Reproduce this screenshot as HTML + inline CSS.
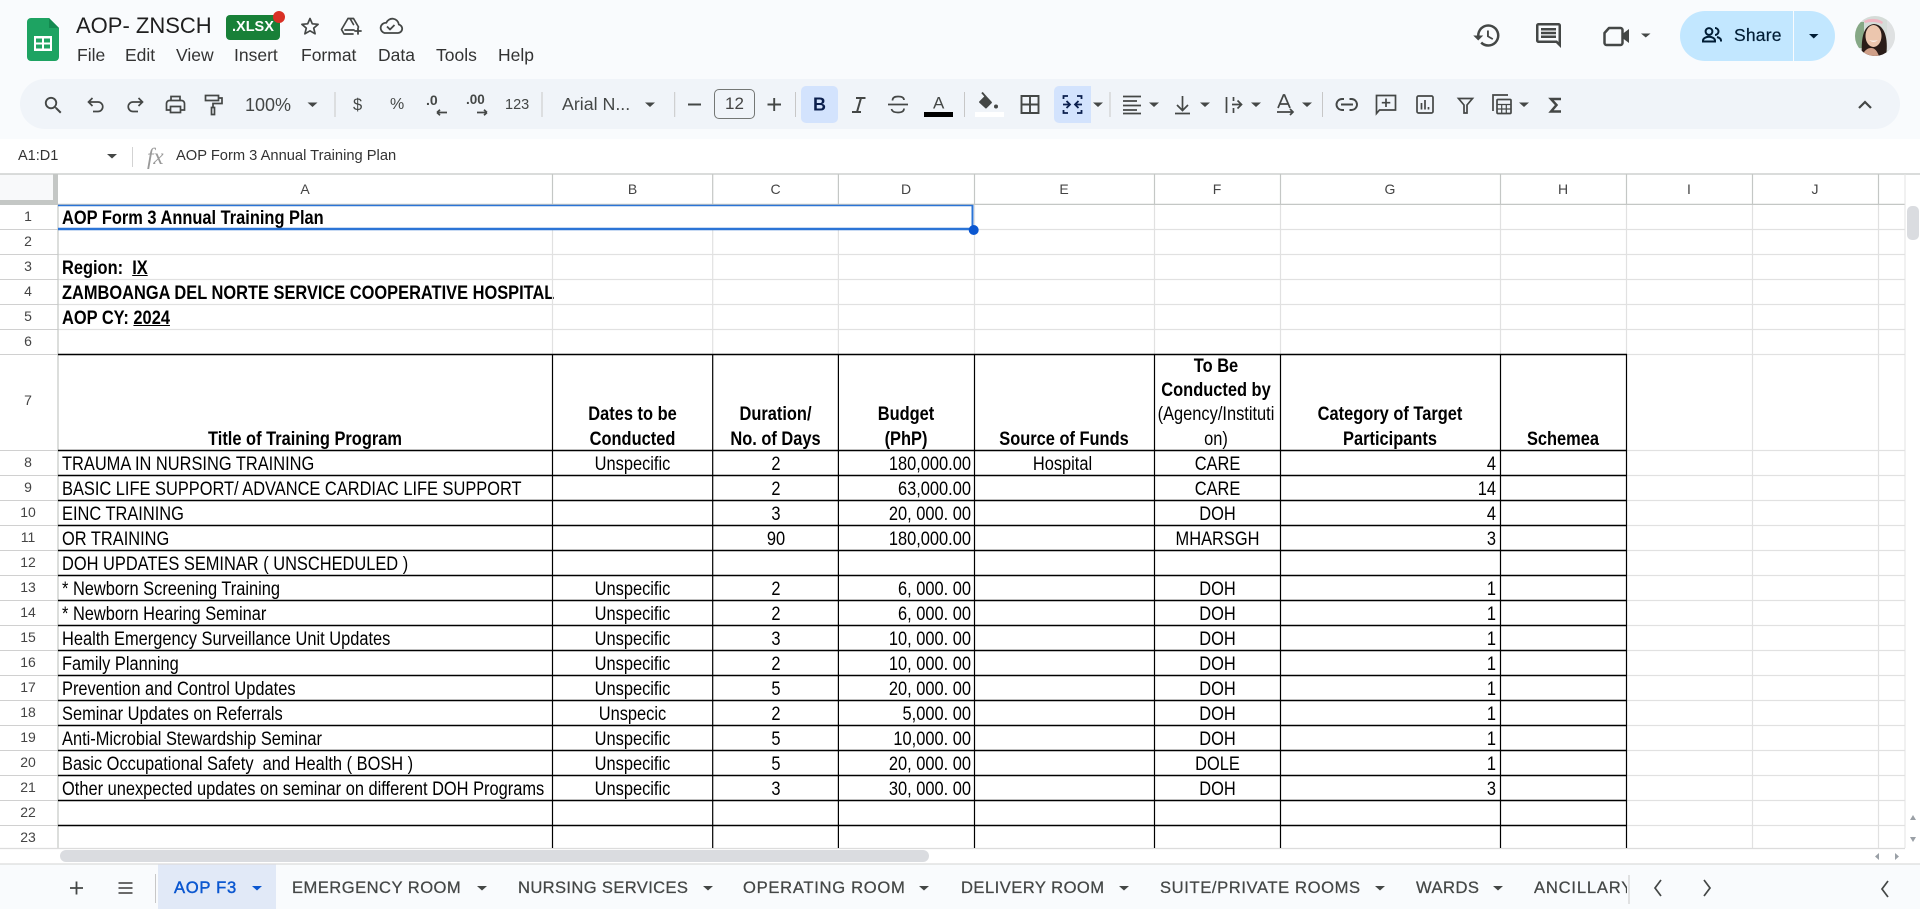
<!DOCTYPE html>
<html><head><meta charset="utf-8"><title>AOP- ZNSCH</title>
<style>
html,body{margin:0;padding:0;width:1920px;height:909px;overflow:hidden;background:#fff;font-family:"Liberation Sans",sans-serif}
#top{position:absolute;left:0;top:0;width:1920px;height:139px;background:#f9fbfd}
#pill{position:absolute;left:20px;top:79px;width:1880px;height:50px;border-radius:25px;background:#f0f4f9}
.box{position:absolute}
.t{position:absolute;white-space:pre;color:#1f1f1f}
.m{font-size:17.5px;top:44px;line-height:22px;color:#333}
.tb{font-size:17px;top:94px;line-height:22px;color:#444746}
.h{position:absolute;top:174px;height:30px;line-height:31px;text-align:center;font-size:14px;color:#444}
.n{position:absolute;left:0;width:56px;text-align:center;height:25px;line-height:23px;font-size:14px;color:#444}
.r{position:absolute;left:0;width:1920px;height:25px;line-height:25px;font-size:19.6px;color:#000}
.r i{position:absolute;font-style:normal;white-space:pre;top:.7px;transform:scaleX(.8375)}
.a{left:62px;transform-origin:0 50%}
.b{left:553px;width:159px;text-align:center}
.c{left:714px;width:124px;text-align:center}
.d{left:839px;width:132px;text-align:right;transform-origin:100% 50%}
.e{left:975px;width:175px;text-align:center}
.f{left:1155px;width:125px;text-align:center}
.g{left:1281px;width:215px;text-align:right;transform-origin:100% 50%}
.b7{position:absolute;font-size:19.6px;line-height:24.3px;color:#000;text-align:center;font-weight:bold;bottom:-1px;white-space:nowrap;transform:scaleX(.8375)}
.tab{position:absolute;top:877px;line-height:22px;font-size:16.6px;letter-spacing:.45px;color:#444746;white-space:pre;-webkit-text-stroke:.25px #444746}
svg{position:absolute;left:0;top:0}
</style></head><body>
<div id="top"></div><div id="pill"></div>
<div class="box" style="left:801px;top:86px;width:37px;height:37px;border-radius:5px;background:#d3e3fd"></div>
<div class="box" style="left:1054px;top:86px;width:37px;height:37px;border-radius:5px 0 0 5px;background:#d3e3fd"></div>
<div class="box" style="left:714px;top:89px;width:41px;height:30px;border:1px solid #747775;border-radius:5px;box-sizing:border-box"></div>
<div class="box" style="left:226px;top:15px;width:54px;height:25px;border-radius:4px;background:#188038"></div>
<div class="box" style="left:1680px;top:11px;width:155px;height:50px;border-radius:25px;background:#c2e7ff"></div>
<div class="box" style="left:1793px;top:11px;width:1px;height:50px;background:#f9fbfd"></div>
<div class="box" style="left:0;top:174px;width:53px;height:26px;background:#f8f9fa"></div>
<div class="box" style="left:0;top:200px;width:58px;height:4px;background:#c4c7c5"></div>
<div class="box" style="left:53px;top:174px;width:5px;height:30px;background:#c4c7c5"></div>
<div class="box" style="left:0;top:864px;width:1920px;height:45px;background:#f9fbfd"></div>
<div class="box" style="left:158px;top:864px;width:118px;height:45px;background:#e1e9f7"></div>

<div class="t" style="left:76px;top:13px;font-size:22px;line-height:26px;color:#1f1f1f">AOP- ZNSCH</div>
<div class="t" style="left:232px;top:18px;font-size:14.5px;line-height:19px;color:#fff;font-weight:bold">.XLSX</div>
<div class="t m" style="left:77px">File</div><div class="t m" style="left:125px">Edit</div><div class="t m" style="left:176px">View</div><div class="t m" style="left:234px">Insert</div><div class="t m" style="left:301px">Format</div><div class="t m" style="left:378px">Data</div><div class="t m" style="left:436px">Tools</div><div class="t m" style="left:498px">Help</div>
<div class="t tb" style="left:245px;font-size:18px">100%</div>
<div class="t tb" style="left:353px;font-size:16.5px">$</div>
<div class="t tb" style="left:390px;font-size:16px">%</div>
<div class="t tb" style="left:426px;font-size:14px;top:89px;font-weight:bold">.0</div>
<div class="t tb" style="left:466px;font-size:13.5px;top:89px;font-weight:bold">.00</div>
<div class="t tb" style="left:505px;font-size:14.5px">123</div>
<div class="t tb" style="left:562px;font-size:17.8px;top:93px">Arial N...</div>
<div class="t tb" style="left:725px;width:20px;font-size:17px;color:#444;top:93px">12</div>
<div class="t" style="left:1734px;top:23px;font-size:17.5px;line-height:24px;color:#001d35;letter-spacing:.2px;-webkit-text-stroke:.2px #001d35">Share</div>
<div class="t" style="left:18px;top:147px;font-size:14.5px;line-height:18px;color:#333">A1:D1</div>
<div class="t" style="left:147px;top:146px;font-size:23px;line-height:22px;color:#999;font-family:'Liberation Serif',serif;font-style:italic">fx</div>
<div class="t" style="left:176px;top:147px;font-size:14.7px;line-height:18px;color:#333">AOP Form 3 Annual Training Plan</div>

<div class="h" style="left:58px;width:494px">A</div><div class="h" style="left:552px;width:161px">B</div><div class="h" style="left:713px;width:125px">C</div><div class="h" style="left:838px;width:136px">D</div><div class="h" style="left:974px;width:180px">E</div><div class="h" style="left:1154px;width:126px">F</div><div class="h" style="left:1280px;width:220px">G</div><div class="h" style="left:1500px;width:126px">H</div><div class="h" style="left:1626px;width:126px">I</div><div class="h" style="left:1752px;width:126px">J</div>

<div class="n" style="top:205px">1</div><div class="n" style="top:230px">2</div><div class="n" style="top:255px">3</div><div class="n" style="top:280px">4</div><div class="n" style="top:305px">5</div><div class="n" style="top:330px">6</div><div class="n" style="top:389px">7</div><div class="n" style="top:451px">8</div><div class="n" style="top:476px">9</div><div class="n" style="top:501px">10</div><div class="n" style="top:526px">11</div><div class="n" style="top:551px">12</div><div class="n" style="top:576px">13</div><div class="n" style="top:601px">14</div><div class="n" style="top:626px">15</div><div class="n" style="top:651px">16</div><div class="n" style="top:676px">17</div><div class="n" style="top:701px">18</div><div class="n" style="top:726px">19</div><div class="n" style="top:751px">20</div><div class="n" style="top:776px">21</div><div class="n" style="top:801px">22</div><div class="n" style="top:826px">23</div>

<div class="r" style="top:205px;font-weight:bold"><i class="a">AOP Form 3 Annual Training Plan</i></div>
<div class="r" style="top:255px;font-weight:bold"><i class="a">Region:  <u>IX</u></i></div>
<div class="r" style="top:280px;font-weight:bold"><i class="a">ZAMBOANGA DEL NORTE SERVICE COOPERATIVE HOSPITAL</i></div>
<div class="r" style="top:305px;font-weight:bold"><i class="a">AOP CY: <u>2024</u></i></div>

<div class="box" style="left:0;top:355px;width:1920px;height:95px">
<div class="b7" style="left:58px;width:494px">Title of Training Program</div>
<div class="b7" style="left:552px;width:161px">Dates to be<br>Conducted</div>
<div class="b7" style="left:713px;width:125px">Duration/<br>No. of Days</div>
<div class="b7" style="left:838px;width:136px">Budget<br>(PhP)</div>
<div class="b7" style="left:974px;width:180px">Source of Funds</div>
<div class="b7" style="left:1122px;width:190px;margin-left:-1px">To Be<br>Conducted by<br><span style="font-weight:normal">(Agency/Instituti<br>on)</span></div>
<div class="b7" style="left:1280px;width:220px">Category of Target<br>Participants</div>
<div class="b7" style="left:1500px;width:126px">Schemea</div>
</div>

<div class="r" style="top:451px"><i class="a">TRAUMA IN NURSING TRAINING</i><i class="b">Unspecific</i><i class="c">2</i><i class="d">180,000.00</i><i class="e">Hospital</i><i class="f">CARE</i><i class="g">4</i></div>
<div class="r" style="top:476px"><i class="a">BASIC LIFE SUPPORT/ ADVANCE CARDIAC LIFE SUPPORT</i><i class="c">2</i><i class="d">63,000.00</i><i class="f">CARE</i><i class="g">14</i></div>
<div class="r" style="top:501px"><i class="a">EINC TRAINING</i><i class="c">3</i><i class="d">20, 000. 00</i><i class="f">DOH</i><i class="g">4</i></div>
<div class="r" style="top:526px"><i class="a">OR TRAINING</i><i class="c">90</i><i class="d">180,000.00</i><i class="f">MHARSGH</i><i class="g">3</i></div>
<div class="r" style="top:551px"><i class="a">DOH UPDATES SEMINAR ( UNSCHEDULED )</i></div>
<div class="r" style="top:576px"><i class="a">* Newborn Screening Training</i><i class="b">Unspecific</i><i class="c">2</i><i class="d">6, 000. 00</i><i class="f">DOH</i><i class="g">1</i></div>
<div class="r" style="top:601px"><i class="a">* Newborn Hearing Seminar</i><i class="b">Unspecific</i><i class="c">2</i><i class="d">6, 000. 00</i><i class="f">DOH</i><i class="g">1</i></div>
<div class="r" style="top:626px"><i class="a">Health Emergency Surveillance Unit Updates</i><i class="b">Unspecific</i><i class="c">3</i><i class="d">10, 000. 00</i><i class="f">DOH</i><i class="g">1</i></div>
<div class="r" style="top:651px"><i class="a">Family Planning</i><i class="b">Unspecific</i><i class="c">2</i><i class="d">10, 000. 00</i><i class="f">DOH</i><i class="g">1</i></div>
<div class="r" style="top:676px"><i class="a">Prevention and Control Updates</i><i class="b">Unspecific</i><i class="c">5</i><i class="d">20, 000. 00</i><i class="f">DOH</i><i class="g">1</i></div>
<div class="r" style="top:701px"><i class="a">Seminar Updates on Referrals</i><i class="b">Unspecic</i><i class="c">2</i><i class="d">5,000. 00</i><i class="f">DOH</i><i class="g">1</i></div>
<div class="r" style="top:726px"><i class="a">Anti-Microbial Stewardship Seminar</i><i class="b">Unspecific</i><i class="c">5</i><i class="d">10,000. 00</i><i class="f">DOH</i><i class="g">1</i></div>
<div class="r" style="top:751px"><i class="a">Basic Occupational Safety  and Health ( BOSH )</i><i class="b">Unspecific</i><i class="c">5</i><i class="d">20, 000. 00</i><i class="f">DOLE</i><i class="g">1</i></div>
<div class="r" style="top:776px"><i class="a">Other unexpected updates on seminar on different DOH Programs</i><i class="b">Unspecific</i><i class="c">3</i><i class="d">30, 000. 00</i><i class="f">DOH</i><i class="g">3</i></div>

<div class="t tab" style="left:174px;color:#0b57d0;-webkit-text-stroke:.45px #0b57d0;letter-spacing:.7px">AOP F3</div>
<div class="t tab" style="left:292px">EMERGENCY ROOM</div>
<div class="t tab" style="left:518px;letter-spacing:.35px">NURSING SERVICES</div>
<div class="t tab" style="left:743px;letter-spacing:.7px">OPERATING ROOM</div>
<div class="t tab" style="left:961px">DELIVERY ROOM</div>
<div class="t tab" style="left:1160px;letter-spacing:.6px">SUITE/PRIVATE ROOMS</div>
<div class="t tab" style="left:1416px">WARDS</div>
<div class="t tab" style="left:1534px;width:93px;overflow:hidden;letter-spacing:.8px">ANCILLARY</div>

<svg width="1920" height="909" viewBox="0 0 1920 909" fill="none">
<g stroke="#e1e1e1" stroke-width="1.2">
<path d="M58 229.500H1905M58 254.500H1905M58 279.500H1905M58 304.500H1905M58 329.500H1905M58 354.500H1905M1627 450.500H1905M1627 475.500H1905M1627 500.500H1905M1627 525.500H1905M1627 550.500H1905M1627 575.500H1905M1627 600.500H1905M1627 625.500H1905M1627 650.500H1905M1627 675.500H1905M1627 700.500H1905M1627 725.500H1905M1627 750.500H1905M1627 775.500H1905M1627 800.500H1905M1627 825.500H1905"/>
<path d="M552.500 230V355M712.700 230V355M838.400 230V355M974.500 205V355M1154.500 205V355M1280.500 205V355M1500.500 205V355M1626.500 205V355M1752.500 205V848M1878.500 205V848"/>
</g>
<path d="M0 229.500H58M0 254.500H58M0 279.500H58M0 304.500H58M0 329.500H58M0 354.500H58M0 450.500H58M0 475.500H58M0 500.500H58M0 525.500H58M0 550.500H58M0 575.500H58M0 600.500H58M0 625.500H58M0 650.500H58M0 675.500H58M0 700.500H58M0 725.500H58M0 750.500H58M0 775.500H58M0 800.500H58M0 825.500H58" stroke="#d0d0d0" stroke-width="1"/>
<g stroke="#c4c7c5" stroke-width="1.2">
<path d="M0 174H1920M0 204.400H1905M58 205V848"/>
<path d="M552.500 174V204M712.700 174V204M838.400 174V204M974.500 174V204M1154.500 174V204M1280.500 174V204M1500.500 174V204M1626.500 174V204M1752.500 174V204M1878.500 174V204"/>
</g>
<path d="M1905 174V848" stroke="#e3e3e3"/>
<path d="M0 848.500H1905M0 864H1920" stroke="#dcdcdc" stroke-width="1.2"/>
<rect x="1907" y="206" width="12" height="34" rx="5" fill="#dadce0"/>
<rect x="60" y="850" width="869" height="12" rx="6" fill="#dadce0"/>
<path d="M1910 820l3-5 3 5zM1910 837l3 5 3-5zM1879 853v7l-4-3.500zM1895 853v7l4-3.500z" fill="#9aa0a6"/>
<g stroke="#000" stroke-width="1.400">
<path d="M58 354.500H1627M58 450.500H1627M58 475.500H1627M58 500.500H1627M58 525.500H1627M58 550.500H1627M58 575.500H1627M58 600.500H1627M58 625.500H1627M58 650.500H1627M58 675.500H1627M58 700.500H1627M58 725.500H1627M58 750.500H1627M58 775.500H1627M58 800.500H1627M58 825.500H1627"/>
<path d="M552.500 354V848M712.700 354V848M838.400 354V848M974.500 354V848M1154.500 354V848M1280.500 354V848M1500.500 354V848M1626.500 354V848" stroke-width="1.200"/>
</g>
<path d="M58 205.500H972.500V229" stroke="#2b74d6" stroke-width="1.400"/>
<path d="M972.500 205V229" stroke="#2b74d6" stroke-width="2"/>
<path d="M58 229H970" stroke="#2b74d6" stroke-width="2.400"/>
<circle cx="973.700" cy="230" r="5" fill="#0b57d0"/>

<path d="M31 18h18l10 10v29a4 4 0 0 1-4 4H31a4 4 0 0 1-4-4V22a4 4 0 0 1 4-4z" fill="#1ea362"/>
<path d="M49 18l10 10H49z" fill="#148a50"/>
<path d="M34 36h18v15H34zM36 38.500v4h6v-4zM44 38.500v4h6v-4zM36 44.500v4h6v-4zM44 44.500v4h6v-4z" fill="#fff" fill-rule="evenodd"/>
<circle cx="279" cy="17" r="6" fill="#d93025"/>
<path d="M310 18.500l2.300 5.300 5.800.5-4.400 3.800 1.400 5.700-5.100-3-5.100 3 1.400-5.700-4.400-3.800 5.800-.5z" stroke="#444746" stroke-width="1.700" stroke-linejoin="round"/>
<g stroke="#444746" stroke-width="1.700" stroke-linejoin="round" stroke-linecap="round">
<path d="M348 18.500h5.500l5 8.500M348 18.500l-6.500 11 2.500 4.500h9M350 18.500l3.500 6M345 30h9"/>
<path d="M358 28v6M355 31h6" stroke-width="1.800"/>
</g>
<path d="M384.500 33h13.500a4.300 4.300 0 0 0 .800-8.500 6.500 6.500 0 0 0-12.500-1.700 5.200 5.200 0 0 0-1.800 10.200zM387 26.500l3 3 4.500-4.500" stroke="#444746" stroke-width="1.800" stroke-linejoin="round"/>

<g fill="#444746">
<path transform="translate(1472 20.500) scale(1.250)" d="M13 3a9 9 0 0 0-9 9H1l3.890 3.890.070.140L9 12H6c0-3.870 3.130-7 7-7s7 3.130 7 7-3.130 7-7 7c-1.930 0-3.680-.790-4.940-2.060l-1.420 1.420A8.954 8.954 0 0 0 13 21a9 9 0 0 0 0-18zm-1 5v5l4.280 2.540.720-1.210-3.500-2.080V8H12z"/>
<path transform="translate(1533.500 20.500) scale(1.250)" d="M22 4c0-1.100-.9-2-2-2H4c-1.100 0-2 .9-2 2v12c0 1.100.9 2 2 2h14l4 4V4zm-2 13.170L18.830 16H4V4h16v13.170zM6 12h12v2H6zm0-3h12v2H6zm0-3h12v2H6z"/>
<path d="M1641 33.500h9.500l-4.750 4z"/>
</g>
<path d="M1609 28h11.500a2 2 0 0 1 2 2v13a2 2 0 0 1-2 2h-14a2 2 0 0 1-2-2V33z" stroke="#444746" stroke-width="2.500" stroke-linejoin="round"/>
<path d="M1623 33.500l6-4.500v14l-6-4.500z" fill="#444746"/>
<g stroke="#001d35" stroke-width="2" fill="none">
<circle cx="1709" cy="31.500" r="3.400"/><path d="M1703 41.500v-1c0-2.500 3.500-3.700 6-3.700s6 1.200 6 3.700v1z"/>
<path d="M1715 28a3.500 3.500 0 0 1 0 7M1717 37c2 .6 4 1.700 4 3.500v1"/>
</g>
<path d="M1809 34h9.500l-4.750 4.500z" fill="#001d35"/>
<clipPath id="av"><circle cx="1875" cy="36" r="20"/></clipPath>
<g clip-path="url(#av)">
<rect x="1855" y="16" width="40" height="40" fill="#d5dcd8"/>
<rect x="1855" y="22" width="9" height="26" fill="#86a886"/>
<rect x="1887" y="20" width="8" height="30" fill="#dfe1e2"/>
<path d="M1862 56c-1-14 0-31 12-32 13 1 14 20 12 32z" fill="#2a1c18"/>
<ellipse cx="1873.500" cy="36" rx="8" ry="11" fill="#ecc6ae"/>
<path d="M1864 21c5-3 14-3 19 1l-1 2c-5-2.500-12-2.500-17-1z" fill="#efb6c2"/>
<path d="M1869 40q4.500 3.500 9 0q-4.500 1.500-9 0z" fill="#fff"/>
<path d="M1862 56c2-5 5-8 9-8s6 3 8 8z" fill="#cf9f88"/>
</g>

<g fill="#444746">
<path transform="translate(42 94) scale(.95)" d="M15.500 14h-.790l-.280-.270A6.471 6.471 0 0 0 16 9.500 6.500 6.500 0 1 0 9.500 16c1.610 0 3.090-.590 4.230-1.570l.270.280v.790l5 4.990L20.490 19l-4.990-5zm-6 0C7.010 14 5 11.990 5 9.500S7.010 5 9.500 5 14 7.010 14 9.500 11.990 14 9.500 14z"/>
<path d="M307.500 102.500h10l-5 4.500zM645 102.500h10l-5 4.500zM1093 102.500h10l-5 4.500zM1149 102.500h10l-5 4.500zM1200 102.500h10l-5 4.500zM1251 102.500h10l-5 4.500zM1302 102.500h10l-5 4.500zM1519 102.500h10l-5 4.500z"/>
<rect x="924" y="112" width="29" height="5" fill="#000"/>
<rect x="975" y="112" width="29" height="5" fill="#fff"/>
</g>
<g stroke="#c7c7c7" stroke-width="1"><path d="M335 92v25M542 92v25M674.700 92v25M795.500 92v25M964.500 92v25M1110 92v25M1322.500 92v25"/></g>
<g stroke="#444746" stroke-width="1.700" stroke-linecap="butt" stroke-linejoin="miter">
<path d="M92.500 98L88.500 102l4 4M88.500 102h9.500a4.500 4.500 0 0 1 0 9.500h-5"/>
<path d="M138.500 98l4 4-4 4M142.500 102h-9.500a4.500 4.500 0 0 0 0 9.500h5"/>
<path d="M171 100V96.500h9V100M170 110h-3.500v-6.500a3 3 0 0 1 3-3h12a3 3 0 0 1 3 3V110H181M170.500 106.500h10v6h-10z"/>
<path d="M205.500 95.500h13v5h-13zM218.500 98h3.500v5.500h-9v4M211.500 107.500h3v7h-3z"/>
<path d="M688 104.500h13M767.500 104.500h13.500M774.200 98v13" stroke-width="1.900"/>
<path d="M437 112.500h10M437 112.500l3-2.800M437 112.500l3 2.800M477 112.500h10M487 112.500l-3-2.800M487 112.500l-3 2.800"/>
<path d="M888 104.500h20M892.500 100.500c0-3 2-4 5.500-4s6 1 6 3.500M904 108.500c0 3-2.500 4-6 4s-6-1-6.500-3.500"/>
<path d="M856 98h9.500M861 98l-4 14M852 112h9" stroke-width="2"/>
<path d="M1021.500 96h17v17h-17zM1030 96v17M1021.500 104.500h17" stroke-width="1.900"/>
<path d="M1123 96.500h18M1123 101h14M1123 105.500h18M1123 110h14M1123 113.500h18" stroke-width="1.800"/>
<path d="M1182.500 96v14M1177 105l5.500 5.500 5.500-5.500M1175 113.500h15"/>
<path d="M1226.500 97v16M1232 104.500h9M1237.500 100.500l4 4-4 4M1233.500 97v4M1233.500 108v5"/>
<path d="M1278 108l5.500-13h1l5.500 13M1280 104h8M1277 112h15M1290 109l3 3-3 3"/>
<path d="M1344 99h-2a5.500 5.500 0 0 0 0 11h2M1349.500 99h2a5.500 5.500 0 0 1 0 11h-2M1341 104.500h12" stroke-width="1.900"/>
<path d="M1376.500 95.500h19v14.500h-16l-3 3.500zM1386 98.500v8.500M1381.800 102.700h8.500"/>
<rect x="1417" y="96" width="16" height="17" rx="1.500"/>
<path d="M1421.500 103v6.500M1425 100v9.500M1428.500 107v2.500"/>
<path d="M1458.500 98.500h14l-5.500 6.500v8h-3v-8z"/>
<path d="M1493 111V95h15"/>
<rect x="1497" y="99.500" width="14" height="14" rx="1"/>
<path d="M1497 104.500h14M1497 109h14M1501.700 104.500v9M1506.300 104.500v9" stroke-width="1.200"/>
<path d="M1561 99h-10l5.500 6-5.500 6.500h10" stroke-width="2.500"/>
<path d="M1859 108l6-6 6 6" stroke-width="2.200"/>
</g>
<text x="813" y="110.500" font-family="Liberation Sans" font-weight="bold" font-size="18" fill="#0b1f4d">B</text>
<text x="933" y="108.500" font-family="Liberation Sans" font-size="17" fill="#444746">A</text>
<g stroke="#444746" stroke-width="1.900" stroke-linejoin="round">
<path d="M982 92.500l3.500 4" stroke-linecap="butt"/>
<path d="M985.500 96.500l5.500 6-5 5-6-5.500z" fill="#444746"/>
</g>
<circle cx="996" cy="106.500" r="2" fill="#444746"/>
<g stroke="#0b1f4d" stroke-width="1.800" fill="none">
<path d="M1068 96h-4.500v3M1063.500 110v3h4.500M1077 96h4.500v3M1081.500 110v3H1077"/>
<path d="M1063 104.500h6.500M1066.500 101l3.500 3.500-3.500 3.500M1082 104.500h-6.500M1078.500 101l-3.500 3.500 3.500 3.500"/>
</g>
<path d="M107 154h10l-5 4.500z" fill="#444746"/>
<path d="M132.500 147v20" stroke="#d3d3d3"/>
<g stroke="#444746" stroke-width="1.800" fill="none">
<path d="M70 888h13M76.500 881.500v13"/>
<path d="M118.500 883h14M118.500 888h14M118.500 893h14" stroke="#555"/>
</g>
<path d="M155.500 874v29M1629 875v29" stroke="#c7c7c7"/>
<path d="M1661 880l-6 8 6 8M1704 880l6 8-6 8M1888 881l-6 8 6 8" stroke="#444746" stroke-width="1.700"/>
<g fill="#444746">
<path d="M477 886h10l-5 4.500zM703 886h10l-5 4.500zM919 886h10l-5 4.500zM1119 886h10l-5 4.500zM1375 886h10l-5 4.500zM1493 886h10l-5 4.500z"/>
</g>
<path d="M252 886h10l-5 4.500z" fill="#0b57d0"/>
</svg>
</body></html>
